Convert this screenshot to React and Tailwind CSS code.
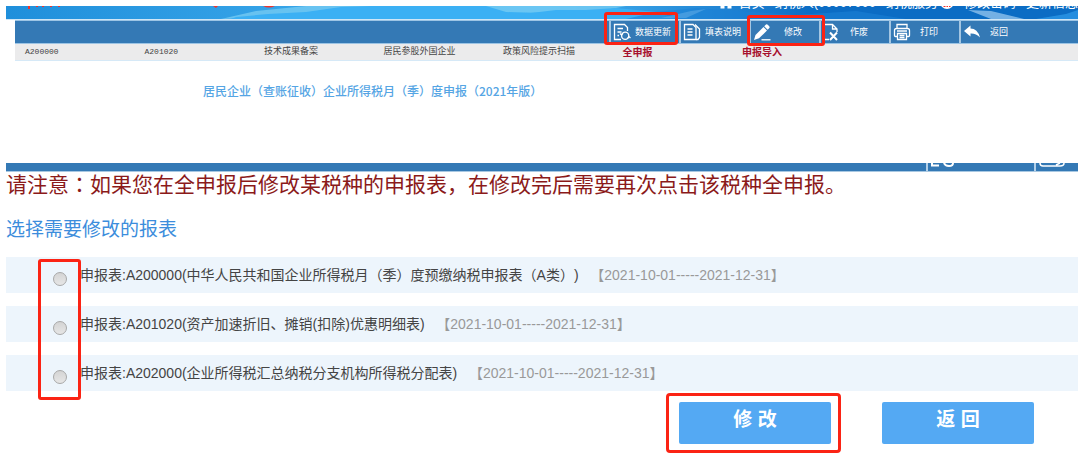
import React from "react";

const svgBase = {
  viewBox: "0 0 18 18",
  fill: "none",
  stroke: "currentColor",
  strokeWidth: 1.3,
  "aria-hidden": true,
};

function UpdateIcon() {
  return (
    <svg {...svgBase} className="size-[18px] shrink-0">
      <path d="M8 16.5H1.5V1.5H11.5L14.5 4.5V8M4.5 5.5H10M4.5 9H8.5M4.5 12.5H6" />
      <circle cx="12.2" cy="12.8" r="3.6" />
      <path d="M7 10.5L8.6 12L10 10.2M17.5 15L15.8 13.5L14.6 15.5" />
    </svg>
  );
}

function DocsIcon() {
  return (
    <svg {...svgBase} className="size-[18px] shrink-0">
      <path d="M1.5 1.5H10L13 4.5V16.5H1.5ZM4.5 6H9.5M4.5 9H9.5M4.5 12H9.5" />
      <path d="M12 1.5L16.5 6V14.5L15 16.5H13" />
    </svg>
  );
}

function PencilIcon() {
  return (
    <svg {...svgBase} className="size-[18px] shrink-0">
      <path
        fill="currentColor"
        stroke="none"
        d="M1 17L2.500 12L10.500 4L14 7.500L6 15.300ZM11.200 3.300L13 1.500Q14 1 15 2L16.200 3.300Q17 4.200 16.300 5L14.700 6.800Z"
      />
      <path d="M8.500 16.800H17.500" />
    </svg>
  );
}

function VoidIcon() {
  return (
    <svg {...svgBase} className="size-[18px] shrink-0">
      <path d="M2 1.5H9.5L14 6V9M9.5 1.5V6H14M1 16.5H6" />
      <path strokeWidth="2" d="M7 9.5L14 17M14 9.5L7 17" />
    </svg>
  );
}

function PrinterIcon() {
  return (
    <svg {...svgBase} className="size-[18px] shrink-0">
      <path d="M4 5.5V1.5H14V5.5M4 13.5H2.5Q1.5 13.5 1.5 12.5V7.5Q1.5 5.5 3.5 5.5H14.5Q16.5 5.5 16.5 7.5V12.5Q16.5 13.5 15.5 13.5H14M4 8H14M4.5 10.5H13.5V16.5H4.5ZM6.5 12.5H11.5M6.5 14.5H11.5" />
    </svg>
  );
}

function BackIcon() {
  return (
    <svg {...svgBase} className="size-[18px] shrink-0">
      <path
        fill="currentColor"
        stroke="none"
        d="M1 8L7.5 2.5V5.5Q14.5 5.5 17 14.5Q13 10.2 7.5 10.5V13.5Z"
      />
    </svg>
  );
}

const markBase = "pointer-events-none absolute z-10 rounded-[3px] border-[3px] border-[#fb2314] ";

const actions = [
  { label: "数据更新", Icon: UpdateIcon, mark: "-top-[9px] right-[1px] -bottom-[2px] -left-[7px]" },
  { label: "填表说明", Icon: DocsIcon },
  { label: "修改", Icon: PencilIcon, mark: "-top-[6px] -right-[6px] -bottom-[3px] -left-[4px]" },
  { label: "作废", Icon: VoidIcon, narrow: true },
  { label: "打印", Icon: PrinterIcon, narrow: true },
  { label: "返回", Icon: BackIcon, narrow: true },
];

const tabs = [
  { label: "A200000" },
  { label: "A201020" },
  { label: "技术成果备案" },
  { label: "居民参股外国企业" },
  { label: "政策风险提示扫描" },
  { label: "全申报", strong: true },
  { label: "申报导入", strong: true },
];

const reports = [
  { code: "A200000", name: "(中华人民共和国企业所得税月（季）度预缴纳税申报表（A类）)" },
  { code: "A201020", name: "(资产加速折旧、摊销(扣除)优惠明细表)" },
  { code: "A202000", name: "(企业所得税汇总纳税分支机构所得税分配表)" },
];

function Banner() {
  return (
    <header className="relative ml-[6px] h-[14px] overflow-hidden border-b border-[#cfe6f7] bg-linear-to-r from-[#1f8fdb] via-[#47b6f3] via-50% to-[#0b6cc4] to-75%">
      <svg
        className="absolute inset-0 size-full"
        viewBox="0 0 1072 13"
        preserveAspectRatio="none"
        aria-hidden="true"
      >
        <path fill="#74cbf2" d="M215 13L250 5L300 0H620L590 6L470 7L360 9Z" opacity=".8" />
        <path
          fill="#3bb0f4"
          d="M230 11L262 8L300 6L335 1L365 0H480L500 6L525 7L550 4L580 4L610 2L650 6L670 13H225Z"
        />
        <path fill="#1a80d6" d="M620 13L650 6L690 2L730 5L790 9L850 5L900 13Z" opacity=".6" />
        <path fill="#8fc2ec" d="M962 4L985 5L1018 13H985Z" opacity=".8" />
        <path fill="#68b0e8" d="M655 12L685 5L700 3L680 12Z" opacity=".5" />
        <path fill="#2a96e6" d="M1030 13L1060 8L1072 4V13Z" opacity=".8" />
        <path
          stroke="#f0322c"
          strokeWidth="2"
          fill="none"
          d="M23 0V3M31 0V1M37 0V1M45 0V1M53 0V1"
        />
        <path fill="#f0322c" d="M207 0H212L210 2ZM257 0H269Q263 3 257 0Z" />
      </svg>
      <nav className="relative flex h-[5px] items-end justify-end gap-[10px] text-[13px] leading-[16px] whitespace-nowrap text-white">
        <a href="#home" className="flex items-end gap-[6px]">
          <svg width="14" height="16" viewBox="0 0 14 16" fill="currentColor" aria-hidden="true">
            <path d="M7 0L14 7H12.500V13.500H8.500V9H5.500V13.500H1.500V7H0Z" />
          </svg>
          首页
        </a>
        <a href="#taxpayer">纳税人(00007000</a>
        <a href="#service" className="flex items-end">
          纳税服务
          <svg className="ml-[2px]" width="14" height="17" viewBox="0 0 14 17" aria-hidden="true">
            <circle cx="7" cy="8" r="7" fill="#fff" />
            <path d="M3.500 12.500H5.500M6.500 12.500H8M9 12.500H10.500" stroke="#f0322c" />
          </svg>
        </a>
        <a href="#password">修改密码</a>
        <a href="#update">更新信息</a>
      </nav>
    </header>
  );
}

function Toolbar() {
  return (
    <div className="ml-[15px] flex h-6 justify-end border-y border-[#9cc4e4] bg-[#3479b5] pr-[49px]">
      {actions.map(({ label, Icon, mark, narrow }) => (
        <div key={label} className="relative flex w-[70px] border-l-2 border-[#a4c6e2]">
          <button
            type="button"
            className="flex flex-1 items-center gap-[4px] pl-[2px] text-[9px] leading-none text-white"
          >
            <Icon />
            <span
              className={
                narrow
                  ? "w-[28px] text-center whitespace-nowrap"
                  : "w-[36px] text-center whitespace-nowrap"
              }
            >
              {label}
            </span>
          </button>
          {mark && <span className={markBase + mark} />}
        </div>
      ))}
    </div>
  );
}

function Tabs() {
  return (
    <nav className="ml-[15px] flex h-[17px] items-center border-b border-[#d6e9f7] bg-[#ebebec] pl-[10px] text-[9px] text-[#444]">
      {tabs.map(({ label, strong }) => (
        <a
          key={label}
          href={"#" + label}
          className={
            strong
              ? "w-[11.35%] text-[10px] font-bold whitespace-nowrap text-[#a60f2c]"
              : label.startsWith("A")
                ? "w-[11.35%] font-['Liberation_Mono','Noto_Sans_CJK_SC',monospace] text-[8px] whitespace-nowrap"
                : "w-[11.35%] whitespace-nowrap"
          }
        >
          {label}
        </a>
      ))}
    </nav>
  );
}

function Divider() {
  return (
    <div className="ml-[6px] flex h-[9px] justify-end overflow-hidden border-b border-[#a8c8e2] bg-[#3479b5] text-white">
      <div className="w-[108px] border-l-2 border-[#b4d0e8]">
        <svg width="30" height="5" viewBox="0 0 30 5" fill="none" stroke="currentColor" strokeWidth="2" aria-hidden="true">
          <path d="M4 0V2.500H11M16 0Q17 3 21 3Q25 3 25 0" />
        </svg>
      </div>
      <div className="w-[44px] border-l-2 border-[#b4d0e8]">
        <svg width="32" height="5" viewBox="0 0 32 5" fill="none" stroke="currentColor" strokeWidth="1.500" aria-hidden="true">
          <path d="M4 0Q4 3 7 3H24Q28 3 28 0M20 2L24 0" />
        </svg>
      </div>
    </div>
  );
}

export default function App() {
  return (
    <div className="bg-white pt-[6px] pr-[2px] font-['Liberation_Sans','Noto_Sans_CJK_SC',sans-serif]">
      <Banner />
      <Toolbar />
      <Tabs />
      <h1 className="mt-[20px] ml-[203px] font-['Noto_Sans_CJK_SC',sans-serif] text-[12px] leading-[20px] font-medium text-[#55a5e4]">
        居民企业（查账征收）企业所得税月（季）度申报（2021年版）
      </h1>
      <div className="mt-[62px]">
        <Divider />
      </div>
      <main className="pl-[6px]">
        <p className="text-[21px] leading-[22px] text-[#8b1a1a]">
          请注意<span className="font-['Noto_Sans_CJK_JP',sans-serif]">：</span>
          如果您在全申报后修改某税种的申报表，在修改完后需要再次点击该税种全申报。
        </p>
        <form>
          <fieldset className="relative mt-[20px]">
            <legend className="mb-[13px] text-[19px] leading-[28px] text-[#3c8ddc]">
              选择需要修改的报表
            </legend>
            <div className="flex flex-col gap-[13px]">
              {reports.map(({ code, name }) => (
                <div key={code} className="flex h-[36px] items-center bg-[#edf5fc] pl-[47px]">
                  <input
                    id={code}
                    type="radio"
                    name="report"
                    className="mt-[8px] mr-[13px] size-[14px] appearance-none rounded-full border border-[#a8a8a8] bg-linear-to-b from-[#d4d4d4] to-[#e6e6e6] checked:border-4"
                  />
                  <label
                    htmlFor={code}
                    className="text-[14px] whitespace-pre text-[#444] [text-spacing-trim:space-all]"
                  >
                    申报表:{code}
                    {name}
                    <span className="text-[#999]">{"   【2021-10-01-----2021-12-31】"}</span>
                  </label>
                </div>
              ))}
            </div>
            <span className="pointer-events-none absolute -bottom-[9px] left-[32px] h-[141px] w-[43px] rounded-[3px] border-[3px] border-[#fb2314]" />
          </fieldset>
          <div className="mt-[2px] flex items-center justify-end gap-[41px] pr-[44px]">
            <div className="rounded-[4px] border-[3px] border-[#fb2314] py-[6px] pr-[7px] pl-[10px]">
              <button
                type="button"
                className="block h-[42px] w-[152px] rounded-[2px] bg-[#54a9f3] pb-[6px] text-[19px] font-bold text-white"
              >
                修 改
              </button>
            </div>
            <button
              type="button"
              className="block h-[42px] w-[152px] rounded-[2px] bg-[#54a9f3] pb-[6px] text-[19px] font-bold text-white"
            >
              返 回
            </button>
          </div>
        </form>
      </main>
    </div>
  );
}
